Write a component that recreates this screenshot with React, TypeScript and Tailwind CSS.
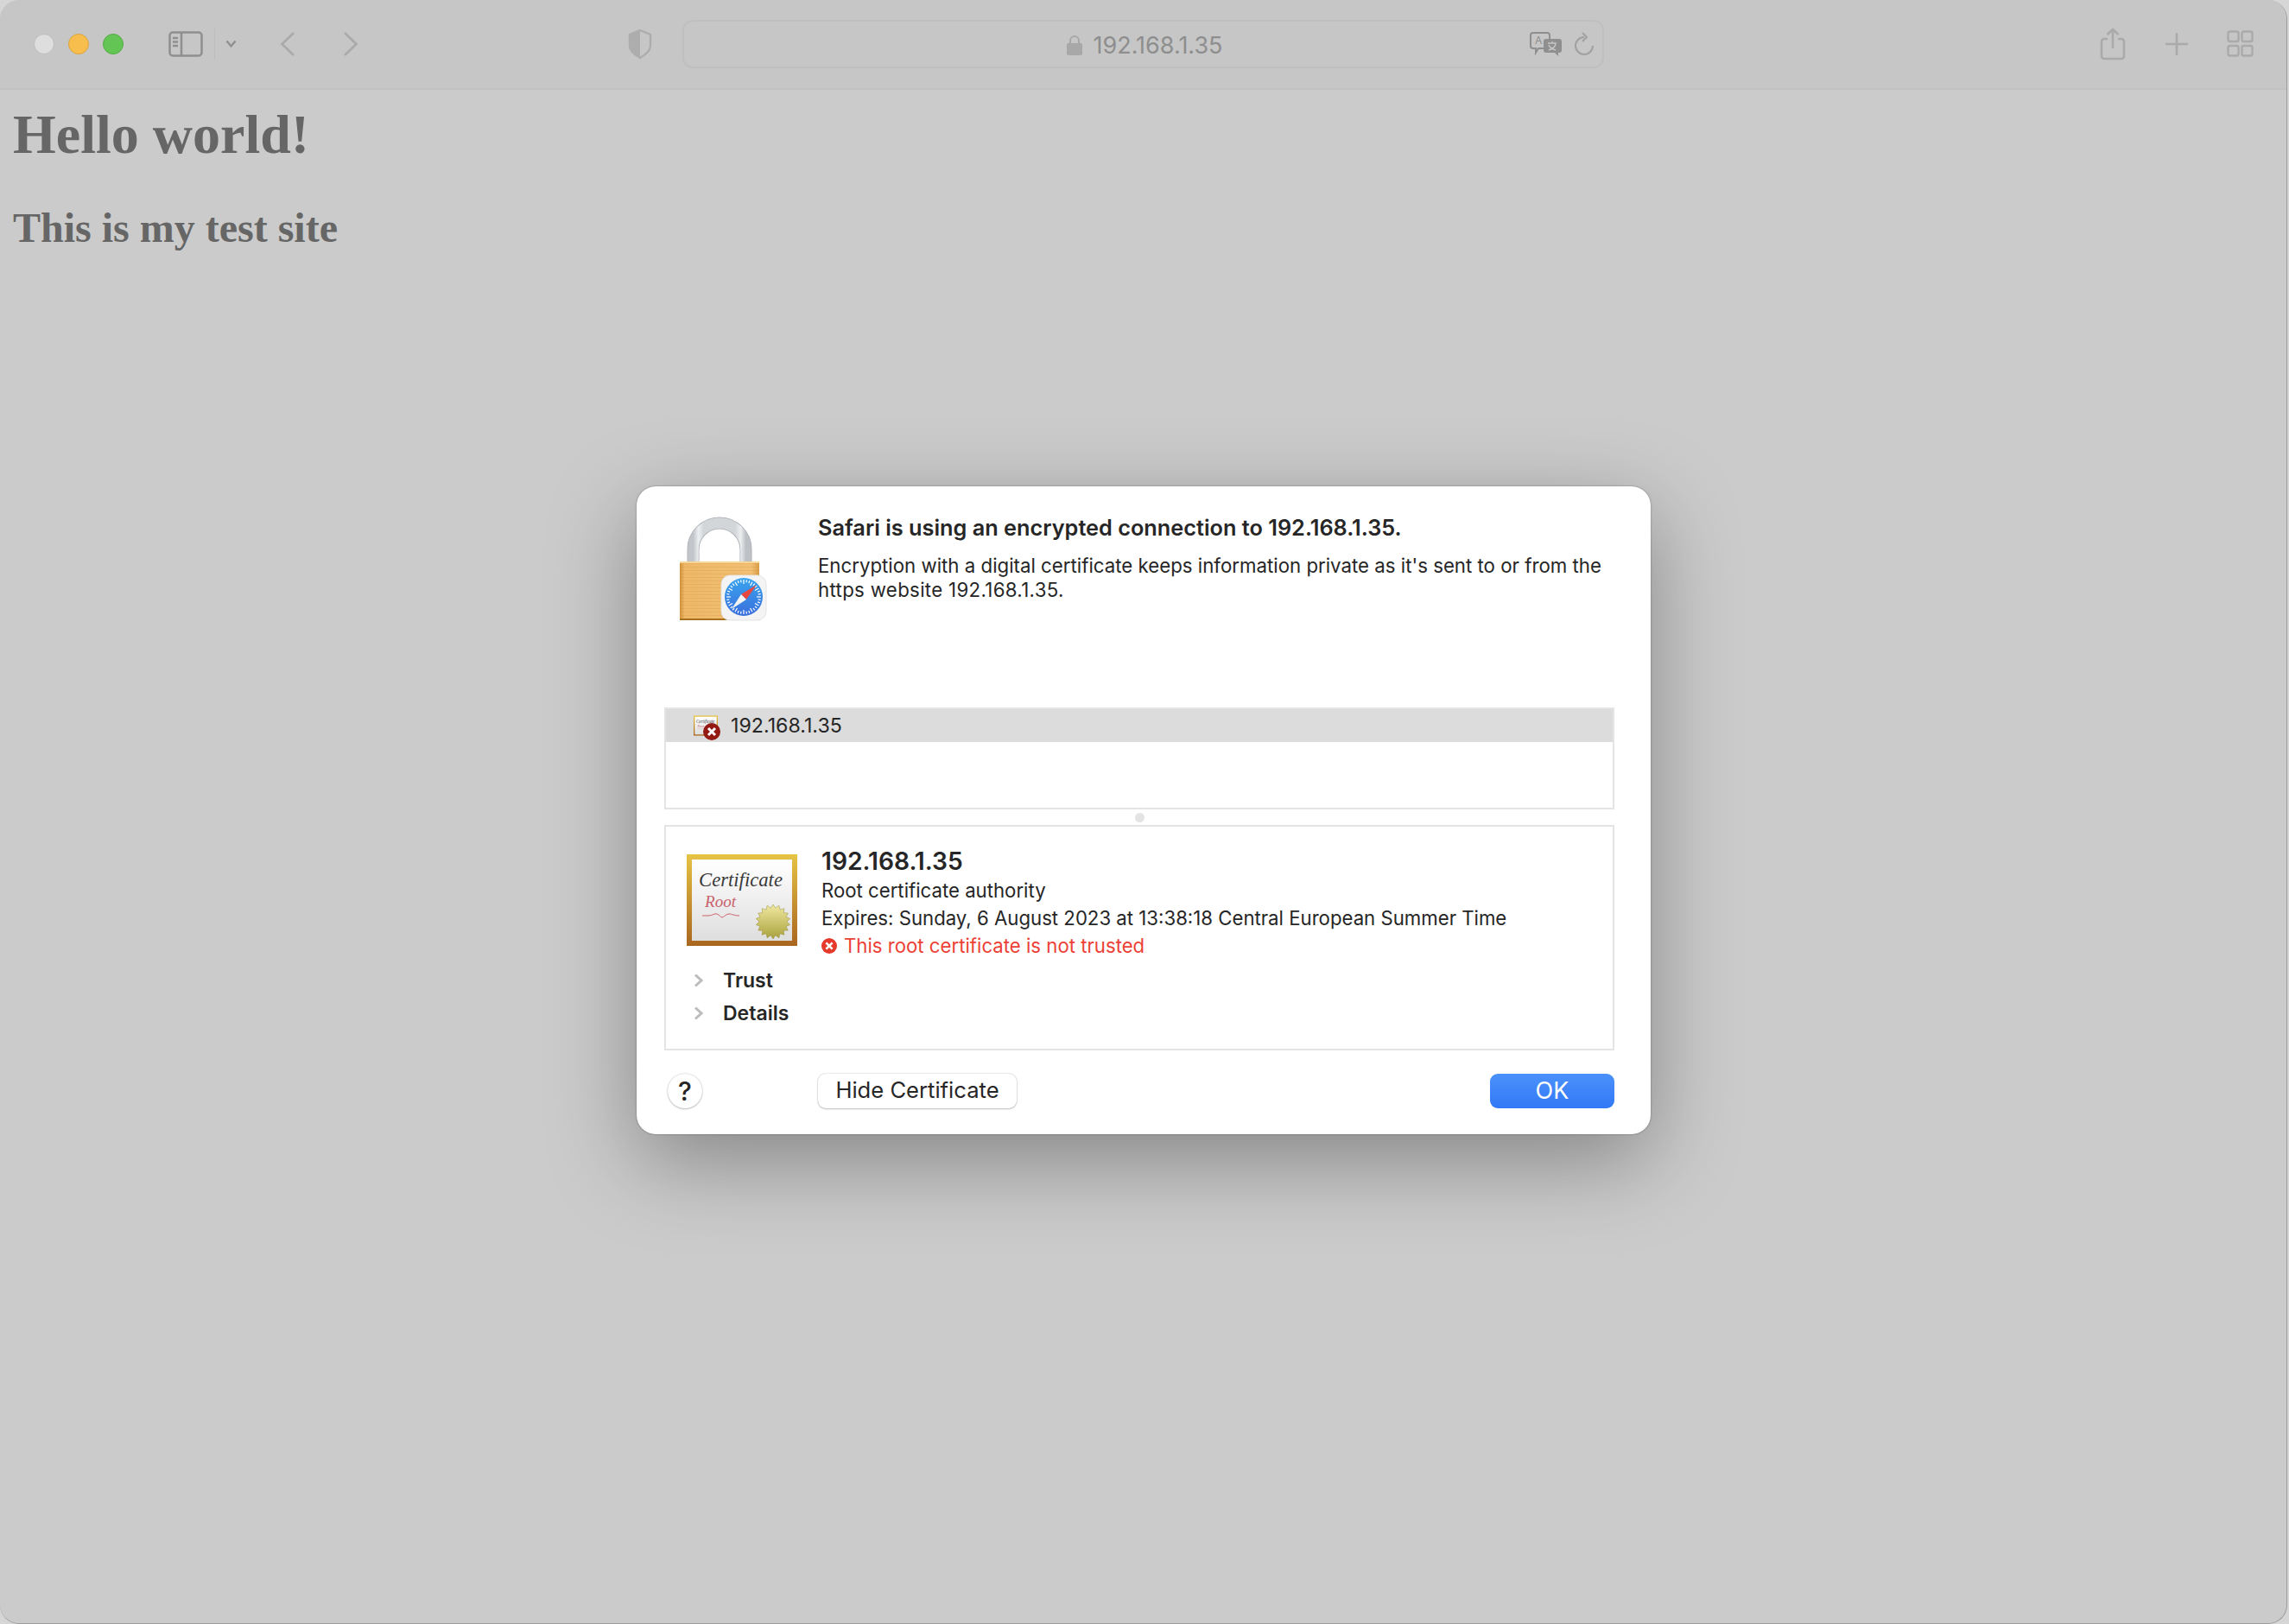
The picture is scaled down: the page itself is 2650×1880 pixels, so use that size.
import React from 'react';

const ticks = Array.from({ length: 36 }, (_, i) => (i * 360) / 36);

const starPoints = (cx: number, cy: number, r1: number, r2: number, n: number) =>
  Array.from({ length: n * 2 }, (_, i) => {
    const r = i % 2 === 0 ? r1 : r2;
    const a = (Math.PI * i) / n;
    return `${cx + r * Math.sin(a)},${cy - r * Math.cos(a)}`;
  }).join(' ');

const LockIcon = () => (
  <svg width="106" height="126" viewBox="0 0 106 126">
    <defs>
      <linearGradient id="shackle" x1="0" x2="1" y1="0" y2="0">
        <stop offset="0" stopColor="#c2c5c9" />
        <stop offset="0.1" stopColor="#eceef0" />
        <stop offset="0.2" stopColor="#d3d6d9" />
        <stop offset="0.8" stopColor="#d3d6d9" />
        <stop offset="0.9" stopColor="#eceef0" />
        <stop offset="1" stopColor="#bdc0c5" />
      </linearGradient>
      <linearGradient id="lockbody" x1="0" x2="1" y1="0" y2="0">
        <stop offset="0" stopColor="#d2923a" />
        <stop offset="0.06" stopColor="#eeb868" />
        <stop offset="0.9" stopColor="#f2c074" />
        <stop offset="1" stopColor="#d99d45" />
      </linearGradient>
      <linearGradient id="dial" x1="0" x2="0" y1="0" y2="1">
        <stop offset="0" stopColor="#39a4ee" />
        <stop offset="1" stopColor="#3a6fdc" />
      </linearGradient>
      <pattern id="stripes" width="4" height="4" patternUnits="userSpaceOnUse">
        <rect width="4" height="1" fill="#c98a30" opacity="0.22" />
      </pattern>
    </defs>
    <path d="M18.500 56V40a30.500 30.500 0 0 1 61 0V56" fill="none" stroke="#a9adb3" strokeWidth="14" />
    <path d="M18.500 56V40a30.500 30.500 0 0 1 61 0V56" fill="none" stroke="url(#shackle)" strokeWidth="12.500" />
    <rect x="3" y="54" width="92" height="68" rx="1" fill="url(#lockbody)" />
    <rect x="3" y="54" width="92" height="68" rx="1" fill="url(#stripes)" />
    <rect x="3" y="54" width="92" height="2" fill="#f7d596" />
    <rect x="3" y="120" width="92" height="2" fill="#a86f1f" />
    <rect x="51" y="70" width="52" height="52" rx="10" fill="#f4f4f5" stroke="#e3e3e3" />
    <circle cx="77" cy="95" r="22" fill="url(#dial)" />
    {ticks.map((t) => (
      <line key={t} x1="77" y1="75" x2="77" y2={t % 30 === 0 ? 80 : 78} stroke="#fff" strokeWidth="1.2" transform={`rotate(${t} 77 95)`} />
    ))}
    <polygon points="92,81 80,98 74,92" fill="#e8483f" />
    <polygon points="63,109 80,98 74,92" fill="#f5f5f5" />
  </svg>
);

const CertIcon = () => (
  <svg className="h-full w-full" viewBox="0 0 128 106">
    <defs>
      <linearGradient id="frame" x1="0" x2="0" y1="0" y2="1">
        <stop offset="0" stopColor="#e6c344" />
        <stop offset="1" stopColor="#a9661f" />
      </linearGradient>
      <linearGradient id="paper" x1="0" x2="0" y1="0" y2="1">
        <stop offset="0" stopColor="#ffffff" />
        <stop offset="1" stopColor="#dedede" />
      </linearGradient>
      <linearGradient id="seal" x1="0" x2="0" y1="0" y2="1">
        <stop offset="0" stopColor="#f1e9a0" />
        <stop offset="1" stopColor="#a9a13c" />
      </linearGradient>
    </defs>
    <rect width="128" height="106" fill="url(#frame)" />
    <rect x="6" y="6" width="116" height="94" fill="url(#paper)" />
    <text x="14" y="37" textLength="97" lengthAdjust="spacingAndGlyphs" fontFamily="'Liberation Serif', serif" fontStyle="italic" fontSize="24" fill="#3a3a3a">Certificate</text>
    <text x="21" y="61" textLength="36" lengthAdjust="spacingAndGlyphs" fontFamily="'Liberation Serif', serif" fontStyle="italic" fontSize="19" fill="#c9626c">Root</text>
    <path d="M18 71h7c5 0 7-3 10-2s4 4 6 4 4-4 8-4 5 2 12 2" fill="none" stroke="#c9626c" strokeWidth="1" />
    <polygon points={starPoints(100, 78, 20, 16, 18)} fill="url(#seal)" stroke="#96903c" strokeWidth="0.5" />
  </svg>
);

const ErrorDot = ({ size, fill }: { size: number; fill: string }) => (
  <svg width={size} height={size} viewBox="0 0 20 20" className="shrink-0">
    <circle cx="10" cy="10" r="10" fill={fill} />
    <path d="M6 6l8 8M14 6l-8 8" stroke="#fff" strokeWidth="3" />
  </svg>
);

const Chevron = () => (
  <svg width="11" height="16" viewBox="0 0 11 16" fill="none" stroke="#bcbcbc" strokeWidth="3">
    <path d="M2 1.500l7 6.500-7 6.500" />
  </svg>
);

const stroke = '#aaaaaa';

const Toolbar = () => (
  <div className="flex h-[104px] shrink-0 items-center border-b-2 border-[#c1c1c1] bg-[#c6c6c6] pb-[1px]">
    <div className="ml-[39px] flex gap-[16px]">
      <div className="h-[24px] w-[24px] rounded-full border border-[#bdbdbd] bg-[#dedede]" />
      <div className="h-[24px] w-[24px] rounded-full border border-[#d9a53f] bg-[#f8be4d]" />
      <div className="h-[24px] w-[24px] rounded-full border border-[#54ab45] bg-[#62c554]" />
    </div>
    <svg className="ml-[52px]" width="40" height="30" viewBox="0 0 40 30" fill="none" stroke="#8f8f8f" strokeWidth="2.5">
      <rect x="1.500" y="1.500" width="37" height="27" rx="3.500" />
      <path d="M15 1.500v27M5 8h6M5 12.500h6M5 17h6" />
    </svg>
    <div className="ml-[13px] h-[36px] w-px bg-[#bdbdbd]" />
    <svg className="ml-[12px]" width="13" height="10" viewBox="0 0 13 10" fill="none" stroke="#8f8f8f" strokeWidth="2.4">
      <path d="M1.500 1.500l5 6 5-6" />
    </svg>
    <svg className="ml-[50px]" width="18" height="30" viewBox="0 0 18 30" fill="none" stroke={stroke} strokeWidth="2.6">
      <path d="M16 2L2.500 15 16 28" />
    </svg>
    <svg className="ml-[55px]" width="18" height="30" viewBox="0 0 18 30" fill="none" stroke={stroke} strokeWidth="2.6">
      <path d="M2 2l13.500 13L2 28" />
    </svg>
    <svg className="ml-[312px]" width="28" height="34" viewBox="0 0 28 34">
      <path d="M14 1l12 5v13c0 6-5 10-12 14C7 29 2 25 2 19V6z" fill="none" stroke="#adadad" strokeWidth="2.4" />
      <path d="M14 1L2 6v13c0 6 5 10 12 14z" fill="#adadad" />
    </svg>
    <div className="relative ml-[35px] flex h-[56px] w-[1067px] items-center justify-center rounded-[12px] border-2 border-[#bfbfbf] bg-[#c6c6c6] pl-[4px] pt-[3px]">
      <svg className="mr-[12px]" width="18" height="24" viewBox="0 0 18 24">
        <path d="M4 11V7a5 5 0 0 1 10 0v4" fill="none" stroke="#a8a8a8" strokeWidth="2" />
        <rect y="10" width="18" height="14" rx="2" fill="#a8a8a8" />
      </svg>
      <span className="font-['Inter',sans-serif] text-[27px] leading-none text-[#8e8e8e]">192.168.1.35</span>
      <svg className="absolute left-[979px] top-[12px]" width="38" height="28" viewBox="0 0 38 28">
        <path d="M4 1h16a3 3 0 0 1 3 3v12a3 3 0 0 1-3 3H10l-3 5v-5H4a3 3 0 0 1-3-3V4a3 3 0 0 1 3-3z" fill="#c6c6c6" stroke="#8f8f8f" strokeWidth="2" />
        <text x="6" y="14" fontFamily="Inter, sans-serif" fontSize="12" fill="#8f8f8f">A</text>
        <path d="M19 8h15a3 3 0 0 1 3 3v10a3 3 0 0 1-3 3h-1v4l-4-4h-10a3 3 0 0 1-3-3V11a3 3 0 0 1 3-3z" fill="#8f8f8f" />
        <path d="M21 13h10M26 11v2M30 14c-1 4-5 6-8 7M22 15c1 3 5 5 8 6" fill="none" stroke="#c6c6c6" strokeWidth="1.4" />
      </svg>
      <svg className="absolute left-[1030px] top-[12px]" width="24" height="27" viewBox="0 0 24 27" fill="none" stroke="#a0a0a0" strokeWidth="2">
        <path d="M12 6a10 10 0 1 0 10 10" />
        <path d="M10 1l5 5-5 5" />
      </svg>
    </div>
    <svg className="ml-[574px]" width="30" height="38" viewBox="0 0 30 38" fill="none" stroke={stroke} strokeWidth="2.6">
      <path d="M9 13H5a3 3 0 0 0-3 3v17a3 3 0 0 0 3 3h20a3 3 0 0 0 3-3V16a3 3 0 0 0-3-3h-4M15 24V2M8.500 8L15 2l6.500 6" />
    </svg>
    <svg className="ml-[45px]" width="28" height="28" viewBox="0 0 28 28" fill="none" stroke={stroke} strokeWidth="2.6">
      <path d="M14 1v26M1 14h26" />
    </svg>
    <svg className="ml-[44px]" width="31" height="31" viewBox="0 0 31 31" fill="none" stroke={stroke} strokeWidth="2.4">
      <rect x="1.500" y="1.500" width="12" height="11.500" rx="2" />
      <rect x="17.500" y="1.500" width="12" height="11.500" rx="2" />
      <rect x="1.500" y="18" width="12" height="11.500" rx="2" />
      <rect x="17.500" y="18" width="12" height="11.500" rx="2" />
    </svg>
  </div>
);

const Dialog = () => (
  <div className="absolute left-[737px] top-[563px] flex h-[750px] w-[1174px] flex-col rounded-[22px] bg-white pl-[32px] pr-[42px] font-['Inter',sans-serif] text-[#262626] shadow-[0_0_2px_rgba(0,0,0,0.45),0_30px_100px_rgba(0,0,0,0.34)]">
    <div className="flex h-[256px] shrink-0">
      <div className="ml-[15px] mt-[33px] w-[163px] shrink-0">
        <LockIcon />
      </div>
      <div className="pt-[34px]">
        <p className="text-[25.3px] font-semibold leading-[28px]">Safari is using an encrypted connection to 192.168.1.35.</p>
        <p className="mt-[16px] whitespace-nowrap text-[22.25px] leading-[28px]">Encryption with a digital certificate keeps information private as it's sent to or from the</p>
        <p className="whitespace-nowrap text-[22.25px] leading-[28px] tracking-[0.32px]">https website 192.168.1.35.</p>
      </div>
    </div>

    <div className="h-[118px] shrink-0 border-2 border-[#e4e4e4]">
      <div className="flex h-[38px] items-center bg-[#dcdcdc] pl-[32px]">
        <div className="relative mr-[15px] h-[24px] w-[28px]">
          <CertIcon />
          <div className="absolute -bottom-[5px] -right-[3px]">
            <ErrorDot size={20} fill="#921a13" />
          </div>
        </div>
        <span className="pt-[2px] text-[23.2px] leading-none">192.168.1.35</span>
      </div>
    </div>

    <div className="flex h-[18px] shrink-0 items-center justify-center">
      <div className="h-[11px] w-[11px] rounded-full bg-[#e4e4e4]" />
    </div>

    <div className="h-[261px] shrink-0 border-2 border-[#e4e4e4] pl-[24px] pt-[32px]">
      <div className="flex">
        <div className="h-[106px] w-[128px] shrink-0">
          <CertIcon />
        </div>
        <div className="ml-[28px] -mt-[9px]">
          <p className="text-[28.2px] font-semibold leading-[35px]">192.168.1.35</p>
          <p className="text-[22.2px] leading-[32px]">Root certificate authority</p>
          <p className="text-[22.2px] leading-[32px]">Expires: Sunday, 6 August 2023 at 13:38:18 Central European Summer Time</p>
          <p className="flex items-center gap-[8px] text-[22.2px] leading-[32px] text-[#ec4136]">
            <ErrorDot size={18} fill="#e5392c" />
            This root certificate is not trusted
          </p>
        </div>
      </div>
      <div className="mt-[5px] flex h-[38px] items-center pl-[8px] text-[23px] font-semibold">
        <Chevron />
        <span className="ml-[23px]">Trust</span>
      </div>
      <div className="flex h-[38px] items-center pl-[8px] text-[23px] font-semibold">
        <Chevron />
        <span className="ml-[23px]">Details</span>
      </div>
    </div>

    <div className="flex items-start pt-[27px]">
      <button className="ml-[4px] flex h-[40px] w-[40px] items-center justify-center rounded-full bg-white text-[30px] font-medium leading-none shadow-[0_0_2px_rgba(0,0,0,0.25),0_1px_2px_rgba(0,0,0,0.2)]">?</button>
      <button className="ml-[134px] h-[40px] w-[230px] rounded-[9px] bg-white pb-[2px] text-[25.6px] leading-none shadow-[0_0_2px_rgba(0,0,0,0.25),0_1px_2px_rgba(0,0,0,0.2)]">Hide Certificate</button>
      <button className="ml-auto h-[40px] w-[144px] rounded-[9px] bg-gradient-to-b from-[#4b91fb] to-[#3378f6] pb-[1px] text-[27px] leading-none text-white">OK</button>
    </div>
  </div>
);

const App = () => (
  <div className="relative h-[1880px] w-[2650px] overflow-hidden bg-[#d6d6d6]">
    <div className="flex h-[1880px] w-[2648px] flex-col overflow-hidden rounded-[22px] border-b border-r border-[#9c9c9c] bg-[#cbcbcb]">
      <Toolbar />
      <div className="px-[15px] font-['Liberation_Serif',serif] font-bold text-[#666666]">
        <h1 className="mt-[15px] text-[64px] leading-[74px]">Hello world!</h1>
        <h2 className="mt-[43px] text-[48px] leading-[56px]">This is my test site</h2>
      </div>
    </div>
    <Dialog />
  </div>
);

export default App;
